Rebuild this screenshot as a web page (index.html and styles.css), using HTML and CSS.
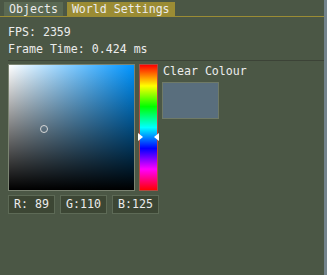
FILE: index.html
```html
<!DOCTYPE html>
<html lang="en">
<head>
<meta charset="UTF-8">
<title>World Settings</title>
<link rel="stylesheet" href="styles.css">
</head>
<body>
<div class="window">
  <div class="tabbar">
    <div class="tab">Objects</div>
    <div class="tab active">World Settings</div>
  </div>

  <div class="content">
    <div class="line">FPS: 2359</div>
    <div class="line">Frame Time: 0.424 ms</div>
    <div class="separator"></div>

    <div class="picker">
      <div class="sv">
        <div class="cursor"></div>
      </div>
      <div class="hue">
        <div class="arrow left"></div>
        <div class="arrow right"></div>
      </div>
      <div class="side">
        <div class="label">Clear Colour</div>
        <div class="swatch"></div>
      </div>
    </div>

    <div class="channels">
      <div class="channel">R: 89</div>
      <div class="channel">G:110</div>
      <div class="channel">B:125</div>
    </div>
  </div>
</div>
</body>
</html>
```

FILE: styles.css
```css
body {
  margin: 0;
  background: #4b5745;
  font-family: 'DejaVu Sans Mono', 'Liberation Mono', monospace;
  font-size: 11.6px;
  color: #ececec;
}
.window {
  width: 324px;
  height: 275px;
  border-right: 3px solid #72838c;
}
.tabbar {
  display: flex;
  gap: 4px;
  padding: 2px 0 0 4px;
  border-bottom: 1px solid #9b8c34;
}
.tab {
  height: 14px;
  line-height: 14px;
  padding: 0 5px;
  background: #5a6953;
}
.tab.active {
  background: #9b8c34;
}
.content {
  padding: 7px 0 0 8px;
}
.line {
  line-height: 17px;
}
.separator {
  height: 1px;
  margin-top: 2px;
  background: #3c4337;
}
.picker {
  display: flex;
  margin-top: 3px;
  height: 127px;
}
.sv {
  position: relative;
  width: 125px;
  height: 125px;
  border: 1px solid #7b8472;
  background: linear-gradient(to top, #000, rgba(0, 0, 0, 0)),
              linear-gradient(to right, #fff, #0095ff);
}
.cursor {
  position: absolute;
  left: 31px;
  top: 60px;
  width: 6px;
  height: 6px;
  border: 1.5px solid #d8d8d8;
  border-radius: 50%;
}
.hue {
  position: relative;
  width: 17px;
  height: 125px;
  margin-left: 4px;
  border: 1px solid #b14a40;
  background: linear-gradient(to bottom, #f00, #ff0 16.7%, #0f0 33.3%, #0ff 50%, #00f 66.7%, #f0f 83.3%, #f00);
}
.arrow {
  position: absolute;
  top: 68px;
  width: 0;
  height: 0;
  border-top: 4px solid transparent;
  border-bottom: 4px solid transparent;
}
.arrow.left {
  left: -2px;
  border-left: 5px solid #fff;
}
.arrow.right {
  right: -2px;
  border-right: 5px solid #fff;
}
.side {
  margin-left: 4px;
}
.label {
  line-height: 15px;
  padding-left: 1px;
}
.swatch {
  width: 55px;
  height: 35px;
  margin-top: 3px;
  border: 1px solid #6f7a67;
  background: #596e7d;
}
.channels {
  display: flex;
  gap: 5px;
  margin-top: 4px;
}
.channel {
  width: 45px;
  height: 17px;
  line-height: 17px;
  text-align: center;
  background: #3c4634;
  border: 1px solid #5d6a56;
}
```
